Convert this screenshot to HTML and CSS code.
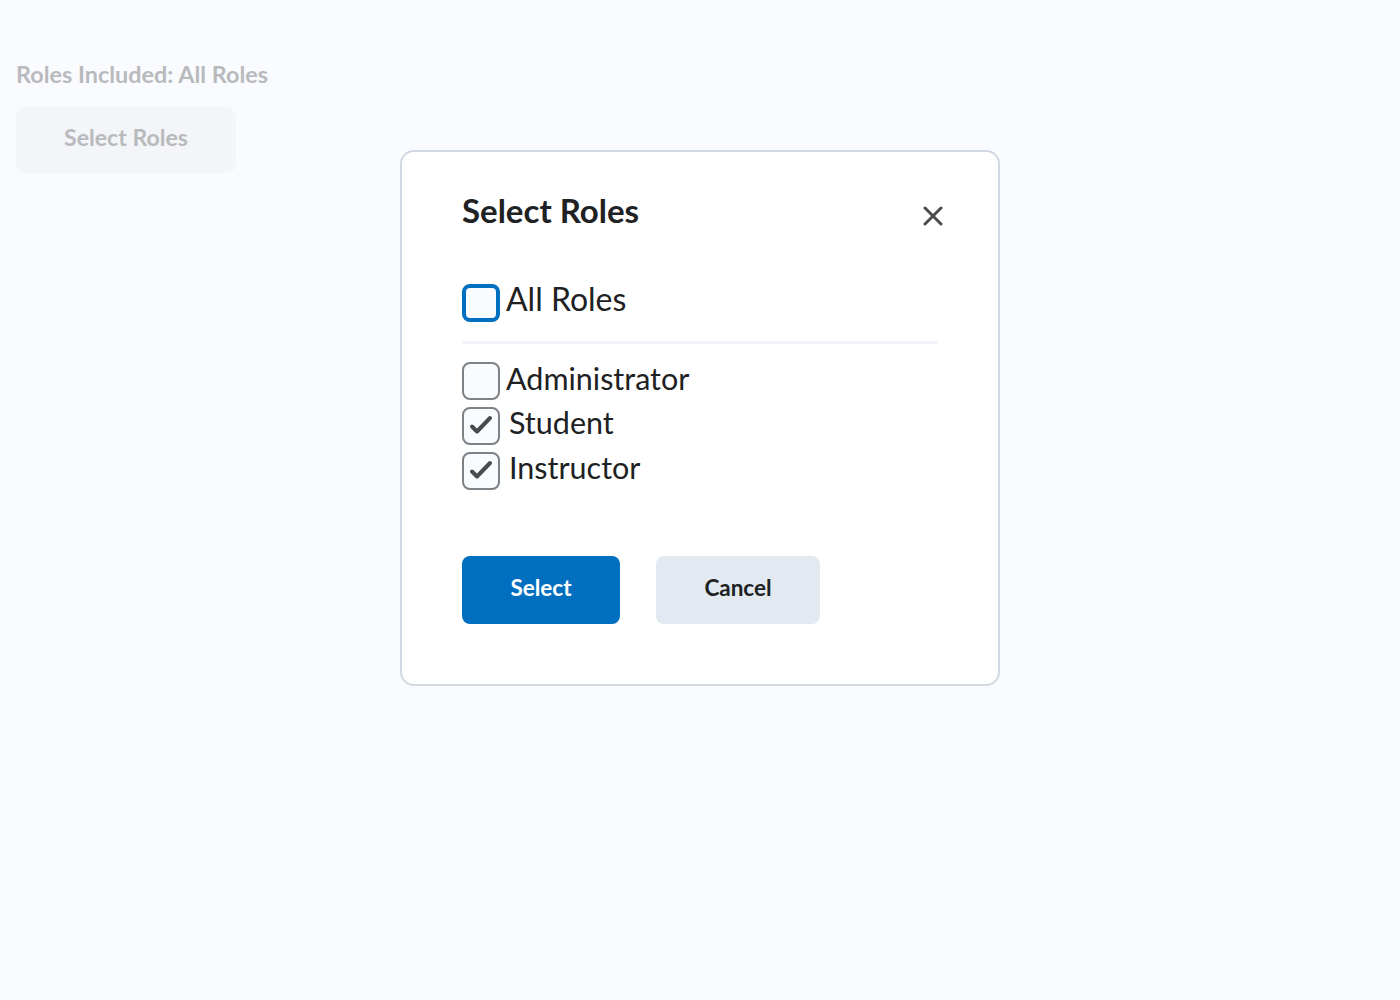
FILE: index.html
```html
<!DOCTYPE html>
<html>
<head>
<meta charset="utf-8">
<link rel="stylesheet" href="styles.css">
</head>
<body>
<div class="page">
  <div class="roles-summary">Roles Included: All Roles</div>
  <button class="btn-open">Select Roles</button>
</div>
<div class="dialog">
  <div class="dialog-head">
    <h2 class="dialog-title">Select Roles</h2>
    <button class="close" aria-label="Close">
      <svg width="20" height="20" viewBox="0 0 20 20"><path d="M2 2L18 18M18 2L2 18" stroke="#494c4e" stroke-width="3" stroke-linecap="round"/></svg>
    </button>
  </div>
  <label class="row all">
    <span class="box focus"></span>
    <span class="lbl lbl-all">All Roles</span>
  </label>
  <div class="sep"></div>
  <div class="list">
    <label class="row">
      <span class="box"></span>
      <span class="lbl">Administrator</span>
    </label>
    <label class="row">
      <span class="box"><svg width="34" height="34" viewBox="0 0 34 34"><path d="M8 17.5L13 22.5L26 9" fill="none" stroke="#494c4e" stroke-width="4" stroke-linecap="round" stroke-linejoin="round"/></svg></span>
      <span class="lbl lbl2">Student</span>
    </label>
    <label class="row">
      <span class="box"><svg width="34" height="34" viewBox="0 0 34 34"><path d="M8 17.5L13 22.5L26 9" fill="none" stroke="#494c4e" stroke-width="4" stroke-linecap="round" stroke-linejoin="round"/></svg></span>
      <span class="lbl lbl2">Instructor</span>
    </label>
  </div>
  <div class="actions">
    <button class="btn primary">Select</button>
    <button class="btn secondary">Cancel</button>
  </div>
</div>
</body>
</html>
```

FILE: styles.css
```css
html, body {
  margin: 0;
  padding: 0;
  background: #f9fbff;
  font-family: Lato, "Noto Sans", sans-serif;
}
.page {
  padding: 60px 16px 0;
}
.roles-summary {
  font-size: 23.4px;
  font-weight: 700;
  color: #b9babd;
  line-height: 28px;
}
.btn-open {
  display: block;
  margin-top: 19px;
  width: 220px;
  height: 66px;
  padding: 0 0 6px;
  border: none;
  border-radius: 10px;
  background: #f3f5f9;
  color: #b9babd;
  font-family: inherit;
  font-size: 23.1px;
  font-weight: 700;
}
.dialog {
  position: absolute;
  left: 400px;
  top: 150px;
  width: 600px;
  height: 536px;
  box-sizing: border-box;
  background: #fff;
  border: 2px solid #d3d9e3;
  border-radius: 14px;
  padding: 0 60px;
}
.dialog-head {
  display: flex;
  align-items: center;
  justify-content: space-between;
  height: 120px;
}
.dialog-title {
  margin: 0 0 4px;
  font-size: 33px;
  font-weight: 700;
  color: #202122;
  line-height: 40px;
}
.close {
  background: none;
  border: none;
  padding: 0;
  margin-right: -5px;
  margin-top: 8px;
  width: 20px;
  height: 20px;
  display: flex;
  align-items: center;
  justify-content: center;
}
.row {
  display: flex;
  align-items: center;
  gap: 6px;
  height: 38px;
}
.row.all {
  margin-top: 12px;
}
.list {
  display: flex;
  flex-direction: column;
  gap: 7px;
}
.box {
  width: 38px;
  height: 38px;
  box-sizing: border-box;
  border: 2px solid #7c8286;
  border-radius: 8px;
  background: #f9fbff;
  display: flex;
  align-items: center;
  justify-content: center;
  flex: none;
}
.box svg {
  display: block;
}
.box.focus {
  border: 4px solid #006fbf;
}
.lbl {
  font-size: 30.5px;
  color: #202122;
  line-height: 38px;
  margin-top: -6px;
}
.lbl-all {
  font-size: 32px;
  margin-top: -8px;
}
.lbl2 {
  margin-left: 3px;
  margin-top: -8px;
}
.sep {
  height: 3px;
  background: #f1f4f8;
  margin: 19px 0 18px;
  width: 476px;
}
.actions {
  display: flex;
  gap: 36px;
  margin-top: 66px;
}
.btn {
  height: 68px;
  border: none;
  border-radius: 8px;
  font-family: inherit;
  font-size: 22.5px;
  font-weight: 700;
  padding: 0 0 5px;
}
.primary {
  width: 158px;
  background: #006fbf;
  color: #fff;
}
.secondary {
  width: 164px;
  background: #e3e9f1;
  color: #202122;
}
```
